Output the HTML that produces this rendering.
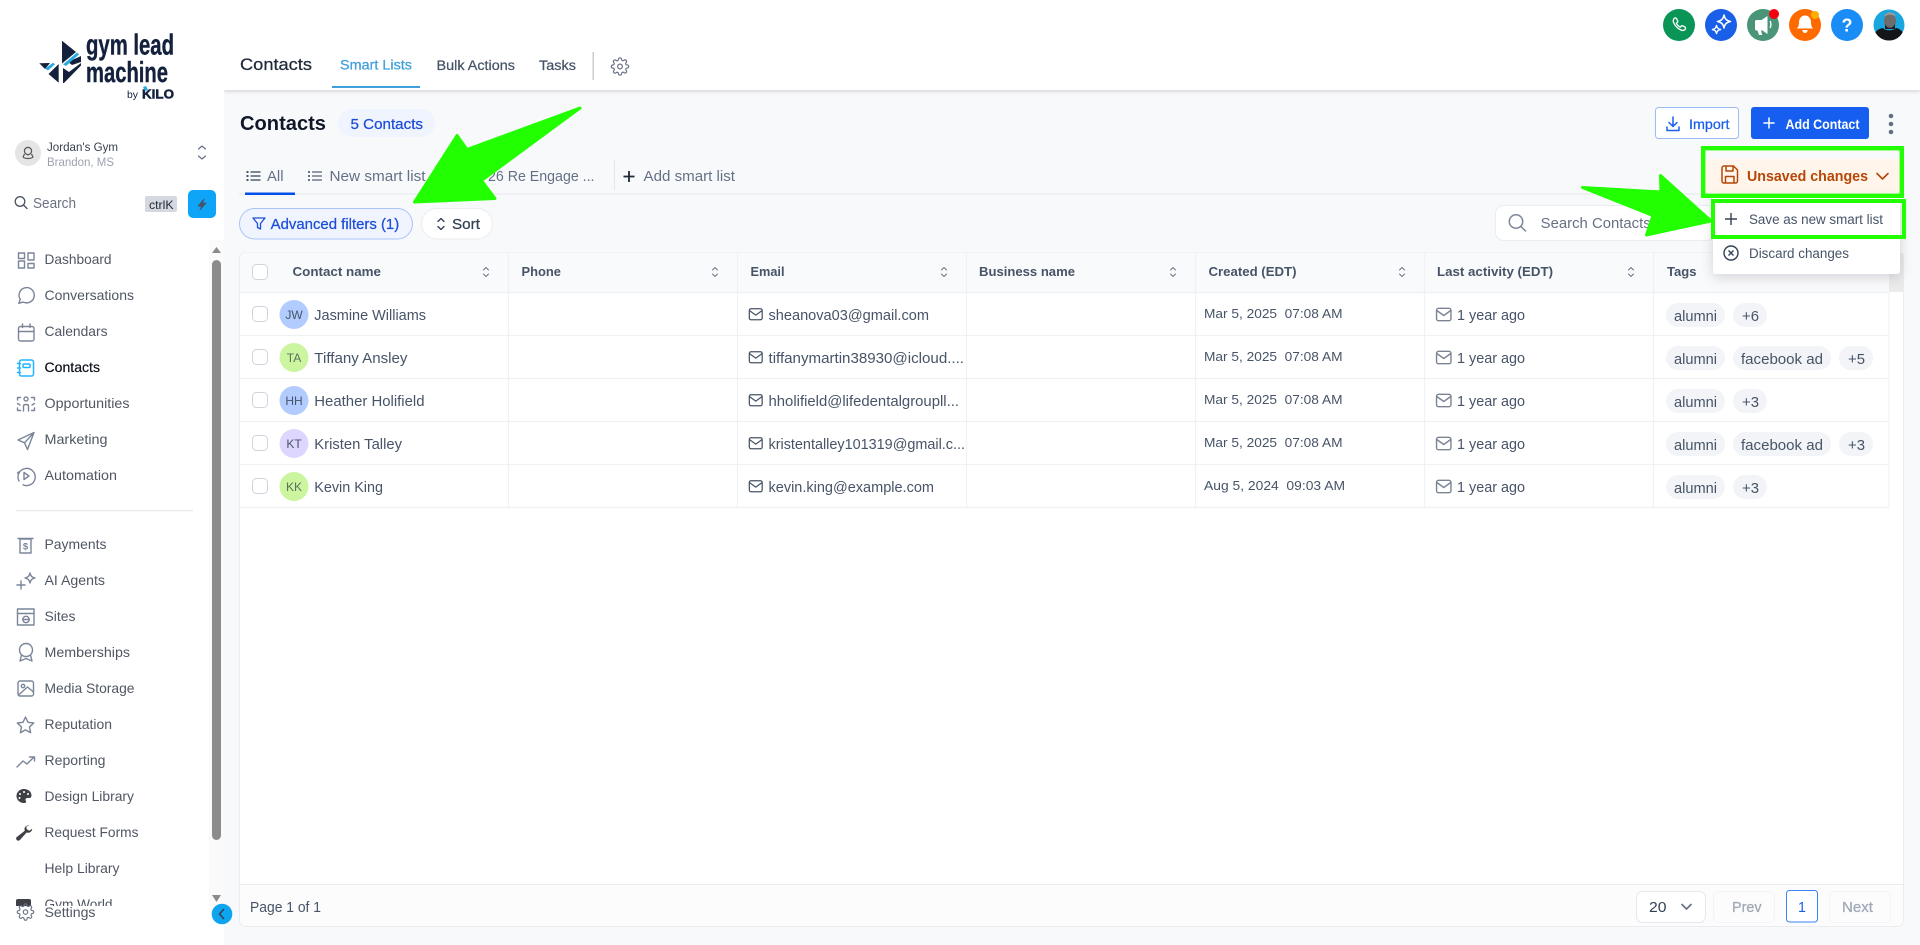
<!DOCTYPE html>
<html lang="en"><head><meta charset="utf-8"><title>Contacts</title>
<style>
html,body{margin:0;padding:0;background:#f8f9fb;overflow:hidden}
svg{display:block}
text{font-family:"Liberation Sans",sans-serif;white-space:pre}
.n{font-size:14px;fill:#505663}
.c{font-size:14.4px;fill:#475467}
.h{font-size:13px;font-weight:bold;fill:#475467}
.d{font-size:13px;fill:#475467}
.g{fill:none;stroke:#7a8599;stroke-width:1.4;stroke-linecap:round;stroke-linejoin:round}
.l{stroke:#f0f1f4;stroke-width:1.2}
.m{stroke-width:.25;stroke:currentColor}
</style></head>
<body>
<svg xmlns="http://www.w3.org/2000/svg" width="1920" height="945" viewBox="0 0 1920 945">
<defs>
<symbol id="gear" viewBox="0 0 24 24"><path fill="none" stroke="currentColor" stroke-width="1.5" d="M12 15a3 3 0 1 0 0-6 3 3 0 0 0 0 6z"/><path fill="none" stroke="currentColor" stroke-width="1.5" stroke-linejoin="round" d="M19.4 15a1.65 1.65 0 0 0 .33 1.82l.06.06a2 2 0 0 1 0 2.83 2 2 0 0 1-2.83 0l-.06-.06a1.65 1.65 0 0 0-1.82-.33 1.65 1.65 0 0 0-1 1.51V21a2 2 0 0 1-2 2 2 2 0 0 1-2-2v-.09A1.65 1.65 0 0 0 9 19.4a1.65 1.65 0 0 0-1.82.33l-.06.06a2 2 0 0 1-2.83 0 2 2 0 0 1 0-2.83l.06-.06a1.65 1.65 0 0 0 .33-1.82 1.65 1.65 0 0 0-1.51-1H3a2 2 0 0 1-2-2 2 2 0 0 1 2-2h.09A1.65 1.65 0 0 0 4.6 9a1.65 1.65 0 0 0-.33-1.82l-.06-.06a2 2 0 0 1 0-2.83 2 2 0 0 1 2.83 0l.06.06a1.65 1.65 0 0 0 1.82.33H9a1.65 1.65 0 0 0 1-1.51V3a2 2 0 0 1 2-2 2 2 0 0 1 2 2v.09a1.65 1.65 0 0 0 1 1.51 1.65 1.65 0 0 0 1.82-.33l.06-.06a2 2 0 0 1 2.83 0 2 2 0 0 1 0 2.83l-.06.06a1.65 1.65 0 0 0-.33 1.82V9a1.65 1.65 0 0 0 1.51 1H21a2 2 0 0 1 2 2 2 2 0 0 1-2 2h-.09a1.65 1.65 0 0 0-1.51 1z"/></symbol>
<symbol id="sort" viewBox="0 0 8 12"><path fill="none" stroke="#667085" stroke-width="1" stroke-linecap="round" stroke-linejoin="round" d="M1.5 4 4 1.5 6.500 4M1.500 8 4 10.500 6.500 8"/></symbol>
<symbol id="env" viewBox="0 0 16 14"><rect x=".8" y=".8" width="14.400" height="12.400" rx="2" fill="none" stroke="currentColor" stroke-width="1.400"/><path d="M1 3 8 8 15 3" fill="none" stroke="currentColor" stroke-width="1.400"/></symbol>
<symbol id="list" viewBox="0 0 14 12"><g fill="currentColor"><rect x="0" y="1" width="2" height="2"/><rect x="0" y="5" width="2" height="2"/><rect x="0" y="9" width="2" height="2"/><rect x="4" y="1.300" width="10" height="1.400"/><rect x="4" y="5.300" width="10" height="1.400"/><rect x="4" y="9.300" width="10" height="1.400"/></g></symbol>
<filter id="ds" x="-20%" y="-20%" width="140%" height="150%"><feDropShadow dx="0" dy="3" stdDeviation="6" flood-color="#101828" flood-opacity=".16"/></filter>
<filter id="hs" x="-2%" y="-10%" width="104%" height="130%"><feDropShadow dx="0" dy="1" stdDeviation="2" flood-color="#101828" flood-opacity=".18"/></filter>
<clipPath id="av"><circle cx="1889" cy="25" r="15.500"/></clipPath>
</defs>

<!-- main background -->
<rect width="1920" height="945" fill="#f8f9fb"/>

<!-- top header -->
<rect x="224" y="0" width="1696" height="90" fill="#fff" filter="url(#hs)"/>
<text x="240" y="70" font-size="17" fill="#1f2937" color="#1f2937" class="m" textLength="72" lengthAdjust="spacingAndGlyphs">Contacts</text>
<text x="340" y="69.500" font-size="13.500" fill="#3f9fdc" color="#3f9fdc" class="m" textLength="72" lengthAdjust="spacingAndGlyphs">Smart Lists</text>
<rect x="332" y="86" width="88" height="2" fill="#3f9fdc"/>
<text x="436.500" y="70" font-size="13.500" fill="#475467" color="#475467" class="m" textLength="78.500" lengthAdjust="spacingAndGlyphs">Bulk Actions</text>
<text x="539" y="70" font-size="13.500" fill="#475467" color="#475467" class="m" textLength="37" lengthAdjust="spacingAndGlyphs">Tasks</text>
<rect x="592.500" y="52" width="1.500" height="28" fill="#ccc"/>
<use href="#gear" x="610.500" y="57" width="19" height="19" color="#667085"/>

<!-- top right icons -->
<circle cx="1679" cy="25" r="16" fill="#0a9557"/>
<path d="M1674 18.500c.8-.8 2-.8 2.500 0l1.200 2.400c.3.600 0 1.100-.5 1.500l-.8.700c.8 1.800 2.200 3.200 4 4l.7-.8c.4-.5.900-.8 1.500-.5l2.400 1.200c.8.400.8 1.700 0 2.500-1 1-2.400 1.200-3.800.6-3.600-1.600-6-4-7.600-7.600-.6-1.400-.4-2.800.6-3.800z" fill="none" stroke="#fff" stroke-width="1.300" stroke-linejoin="round"/>
<circle cx="1721" cy="25" r="16" fill="#1a5fe8"/>
<path d="M1724 15c.8 4 2.500 5.700 6.500 6.500-4 .8-5.700 2.500-6.500 6.500-.8-4-2.500-5.700-6.500-6.500 4-.8 5.700-2.500 6.500-6.500zM1716.500 25.500c.5 2.500 1.500 3.500 4 4-2.500.5-3.500 1.500-4 4-.5-2.500-1.500-3.500-4-4 2.500-.5 3.500-1.500 4-4z" fill="none" stroke="#fff" stroke-width="1.500" stroke-linejoin="round"/>
<circle cx="1763" cy="25" r="16" fill="#4a9478"/>
<path d="M1755 21.500c0-1 .7-1.500 1.500-1.500h5l6-4v18l-5-3.500h-1.500l1.200 4.500h-3.200l-1.500-4.500h-1c-.8 0-1.500-.6-1.500-1.500z" fill="#fff"/><path d="M1770 21c1.200 1.500 1.200 5 0 7" fill="none" stroke="#fff" stroke-width="1.400"/>
<circle cx="1774" cy="14" r="5" fill="#f5000c"/>
<circle cx="1805" cy="25" r="16" fill="#ff6a00"/>
<path d="M1805 15.500c-4 0-6 3.300-6 7 0 3.200-.8 4.700-2.200 6h16.400c-1.400-1.300-2.200-2.800-2.200-6 0-3.700-2-7-6-7zM1802.300 30h5.400c-.3 2-1.300 3-2.700 3s-2.400-1-2.700-3z" fill="#fff"/>
<circle cx="1815" cy="15" r="4" fill="#fbb000"/>
<circle cx="1847" cy="25" r="16" fill="#1a8cf5"/>
<text x="1847" y="31.500" font-size="18" font-weight="bold" fill="#fff" text-anchor="middle">?</text>
<g clip-path="url(#av)"><rect x="1873" y="9" width="32" height="32" fill="#1aa7e0"/><path d="M1873 42c0-8 3-13 10-14 2 3 11 3 13 0 6 1 9 6 9 14z" fill="#141518"/><ellipse cx="1890" cy="21" rx="6" ry="7.500" fill="#6e6d6b"/><path d="M1884.500 17c2-3 9-3 11 0l-.5-3-5-2-5 2z" fill="#9a9a98"/><path d="M1885 24c2 5 8 5 10 0v5h-10z" fill="#1e1e1e"/></g>

<!-- sidebar -->
<rect x="0" y="0" width="224" height="945" fill="#fff"/>
<g fill="#14213d">
<polygon points="62,40.700 76,52 62,63.500"/>
<polygon points="68,62 81,56 81,62 72,65"/>
<polygon points="63,83 63,68 69,72 81,63 81,65.500 64,83"/>
<polygon points="48.500,74 58.700,64 58.700,82.700"/>
<polygon points="39.300,63.300 50,63 45,69"/>
</g>
<polygon points="63,64.500 77,52.500 79,54.500 66,66" fill="#29abe2"/>
<polygon points="45,68.500 53,62.700 55,64.200 48,70.500" fill="#29abe2"/>
<text x="86" y="54.500" font-size="29" font-weight="bold" fill="#14213d" stroke="#14213d" stroke-width=".4" textLength="88" lengthAdjust="spacingAndGlyphs">gym lead</text>
<text x="86" y="82" font-size="29" font-weight="bold" fill="#14213d" stroke="#14213d" stroke-width=".4" textLength="82" lengthAdjust="spacingAndGlyphs">machine</text>
<text x="127" y="98" font-size="10" fill="#14213d" textLength="11" lengthAdjust="spacingAndGlyphs">by</text>
<text x="142" y="98.500" font-size="13" font-weight="bold" fill="#14213d" textLength="32" lengthAdjust="spacingAndGlyphs" stroke="#14213d" stroke-width=".5">KILO</text>
<polygon points="143,87 146,86 148,90 145,91" fill="#29abe2"/>

<circle cx="28" cy="153" r="13" fill="#e5e5e5"/>
<circle cx="28" cy="151" r="3.600" fill="none" stroke="#555" stroke-width="1.200"/><path d="M23 157c2 2 8 2 10 0l-1.500-3M23 157l1.500-3M28 155.500v-1" fill="none" stroke="#555" stroke-width="1.200"/>
<text x="47" y="151" font-size="12.300" fill="#374151" textLength="71" lengthAdjust="spacingAndGlyphs">Jordan's Gym</text>
<text x="47" y="166" font-size="12.300" fill="#9ca3af" textLength="67" lengthAdjust="spacingAndGlyphs">Brandon, MS</text>
<path d="M198.500 149l3.500-3 3.500 3M198.500 156l3.500 3 3.500-3" fill="none" stroke="#667085" stroke-width="1.200" stroke-linecap="round" stroke-linejoin="round"/>

<circle cx="20" cy="201.500" r="4.800" fill="none" stroke="#4b5563" stroke-width="1.300"/><path d="M23.500 205l3.500 3.500" stroke="#4b5563" stroke-width="1.400" stroke-linecap="round"/>
<text x="33" y="208" font-size="14.500" fill="#6b7280" textLength="43" lengthAdjust="spacingAndGlyphs">Search</text>
<rect x="145" y="196" width="32" height="16" rx="2" fill="#d5d8de"/>
<text x="149" y="209" font-size="12" fill="#1f2937" textLength="24.500" lengthAdjust="spacingAndGlyphs">ctrlK</text>
<rect x="188" y="190" width="28" height="28" rx="5" fill="#0ea5f9"/>
<path d="M204 199l-6 7h3.500l-1.500 4 6-7h-3.500z" fill="#475467" stroke="#475467" stroke-width=".8" stroke-linejoin="round"/>

<!-- track and thumb -->
<rect x="209" y="240" width="15" height="666" fill="#fafafa"/>
<path d="M212 253l4.500-6 4.500 6z" fill="#8a8a8a"/>
<rect x="212" y="260" width="9" height="580" rx="4.500" fill="#8b8b8b"/>
<path d="M212 895l4.500 7 4.500-7z" fill="#8a8a8a"/>

<!-- sidebar icons -->
<g class="g">
<rect x="18.500" y="253" width="6" height="5.500"/><rect x="28" y="253" width="6" height="7"/><rect x="18.500" y="261" width="6" height="7"/><rect x="28" y="263.500" width="6" height="4.500"/>
<path d="M18.800 303.300l1.500-3.900a7.600 7.600 0 1 1 3.100 2.700z"/>
<rect x="18.500" y="326.500" width="15.500" height="14.500" rx="2"/><path d="M18.500 331.500h15.500M22.500 324v3.500M30 324v3.500"/>
</g>
<g fill="none" stroke="#20b5ff" stroke-width="1.500" stroke-linecap="round" stroke-linejoin="round">
<rect x="19.500" y="360" width="14" height="16" rx="2"/><rect x="23" y="364" width="7" height="3.500" rx="1"/><path d="M17.500 363.500h3M17.500 368h3M17.500 372.500h3"/>
</g>
<g class="g">
<circle cx="26" cy="399" r="2"/><path d="M23.500 411v-5c0-2 5-2 5 0v5"/><path d="M17.500 400v-2.500h3M34.500 400v-2.500h-3M17.500 408v2.500h3M34.500 408v2.500h-3M17.500 403.500l2.500 1.500M34.500 403.500l-2.500 1.500"/>
<path d="M34 432.500L18 440l6.500 2.800L27.500 449.500zM34 432.500l-9.500 10.300"/>
<path d="M19 481a8.600 8.600 0 1 1 4 3.800M18.500 472l-1 1"/><path d="M24 472.500v7l5-3.500z"/>
<rect x="20" y="539" width="11" height="14"/><path d="M18 538.500h15"/>
<path d="M30 573c.7 3 1.800 4.300 5 5-3.200.7-4.300 2-5 5-.7-3-1.800-4.300-5-5 3.200-.7 4.300-2 5-5zM21 581v8M17 585h8"/>
<rect x="17.500" y="609" width="16.500" height="16"/><path d="M17.500 613.500H34"/><circle cx="26" cy="619.500" r="3.200"/><path d="M22.800 619.500h6.400"/>
<circle cx="26" cy="650" r="6.500"/><path d="M21.500 655l-1.500 6 6-2.500 6 2.500-1.500-6"/>
<rect x="18" y="681" width="15.500" height="15" rx="2"/><circle cx="23" cy="686" r="1.700"/><path d="M18.500 695l9-8 6 5"/>
<path d="M25.500 717l2.500 5.300 5.700.7-4.200 4 1.100 5.700-5.100-2.800-5.100 2.800 1.100-5.700-4.200-4 5.700-.7z"/>
<path d="M17 767l6-6 4 3 7-7M29.500 757H34.500v4"/>
</g>
<text x="25.500" y="549.500" font-size="9.500" font-weight="bold" fill="#7a8599" text-anchor="middle">$</text>
<path d="M24 789a7.500 7 0 1 0 0 14c2 0 2.500-1 1.800-2.300-.8-1.500 0-2.700 1.700-2.700h2c1.300 0 2-1 2-2.700 0-3.700-3.700-6.300-7.500-6.300z" fill="#3f3f46"/>
<g fill="#fff"><circle cx="20" cy="794" r="1"/><circle cx="24" cy="792" r="1"/><circle cx="28" cy="794" r="1"/><circle cx="19.500" cy="798" r="1"/></g>
<path d="M29.500 825.500c-2.500-.6-5 1-5 3.700 0 .6.100 1 .3 1.500l-8 6.300c-1 .9-.8 2.400.2 3.200.9.700 2.100.6 2.900-.2l6.700-7.500c2.700 1 5.500-.8 5.600-3.700l-3 2-2.500-1.700-.4-2.600z" fill="#3f3f46"/>

<!-- sidebar labels -->
<text class="n" x="44.500" y="264" textLength="67" lengthAdjust="spacingAndGlyphs">Dashboard</text>
<text class="n" x="44.500" y="300" textLength="89.500" lengthAdjust="spacingAndGlyphs">Conversations</text>
<text class="n" x="44.500" y="336" textLength="63" lengthAdjust="spacingAndGlyphs">Calendars</text>
<text class="n" x="44.500" y="372" style="fill:#0b0f19" color="#0b0f19" textLength="55.500" lengthAdjust="spacingAndGlyphs" stroke="#0b0f19" stroke-width=".2">Contacts</text>
<text class="n" x="44.500" y="408" textLength="85" lengthAdjust="spacingAndGlyphs">Opportunities</text>
<text class="n" x="44.500" y="444" textLength="63" lengthAdjust="spacingAndGlyphs">Marketing</text>
<text class="n" x="44.500" y="480" textLength="72.500" lengthAdjust="spacingAndGlyphs">Automation</text>
<rect x="16" y="510" width="177" height="1.200" fill="#e7e8ea"/>
<text class="n" x="44.500" y="549" textLength="62" lengthAdjust="spacingAndGlyphs">Payments</text>
<text class="n" x="44.500" y="585" textLength="60.500" lengthAdjust="spacingAndGlyphs">AI Agents</text>
<text class="n" x="44.500" y="621" textLength="31" lengthAdjust="spacingAndGlyphs">Sites</text>
<text class="n" x="44.500" y="657" textLength="85.500" lengthAdjust="spacingAndGlyphs">Memberships</text>
<text class="n" x="44.500" y="693" textLength="90" lengthAdjust="spacingAndGlyphs">Media Storage</text>
<text class="n" x="44.500" y="729" textLength="67.500" lengthAdjust="spacingAndGlyphs">Reputation</text>
<text class="n" x="44.500" y="765" textLength="61" lengthAdjust="spacingAndGlyphs">Reporting</text>
<text class="n" x="44.500" y="801" textLength="89.500" lengthAdjust="spacingAndGlyphs">Design Library</text>
<text class="n" x="44.500" y="837" textLength="94" lengthAdjust="spacingAndGlyphs">Request Forms</text>
<text class="n" x="44.500" y="873" textLength="75" lengthAdjust="spacingAndGlyphs">Help Library</text>
<text class="n" x="44.500" y="909" textLength="68" lengthAdjust="spacingAndGlyphs">Gym World</text>
<rect x="16" y="899" width="15" height="10" rx="2" fill="#3f3f46"/>
<rect x="0" y="906" width="209" height="39" fill="#fff"/>
<rect x="209" y="906" width="15" height="39" fill="#fff"/>
<use href="#gear" x="16.500" y="903" width="18" height="18" color="#667085"/>
<text class="n" x="44.500" y="917" textLength="51" lengthAdjust="spacingAndGlyphs">Settings</text>
<circle cx="222" cy="914" r="10.300" fill="#0ea5f0"/>
<path d="M223.500 909.500l-4 4.500 4 4.500" fill="none" stroke="#344054" stroke-width="1.600" stroke-linecap="round" stroke-linejoin="round"/>

<!-- page title -->
<text x="240" y="130" font-size="20.500" font-weight="bold" fill="#101828" textLength="86" lengthAdjust="spacingAndGlyphs">Contacts</text>
<rect x="338" y="109" width="97" height="28" rx="14" fill="#eff4fe"/>
<text x="350.500" y="129" font-size="14.300" fill="#1d4ed8" color="#1d4ed8" class="m" textLength="72.500" lengthAdjust="spacingAndGlyphs">5 Contacts</text>

<!-- actions -->
<rect x="1655.500" y="107.500" width="83" height="31" rx="3" fill="#fff" stroke="#9cbcf5"/>
<path d="M1673 117v9M1669 122.500l4 4 4-4M1667 127v3.500h12V127" fill="none" stroke="#1a5fe8" stroke-width="1.500" stroke-linecap="round" stroke-linejoin="round"/>
<text x="1689" y="129" font-size="14" fill="#1a5fe8" color="#1a5fe8" class="m" textLength="40.500" lengthAdjust="spacingAndGlyphs">Import</text>
<rect x="1751" y="107" width="118" height="32" rx="3" fill="#155eef"/>
<path d="M1769 118v10M1764 123h10" stroke="#fff" stroke-width="1.500" stroke-linecap="round"/>
<text x="1785.500" y="129" font-size="14" font-weight="bold" fill="#fff" textLength="74" lengthAdjust="spacingAndGlyphs">Add Contact</text>
<g fill="#667085"><circle cx="1891" cy="116" r="2.300"/><circle cx="1891" cy="124" r="2.300"/><circle cx="1891" cy="132" r="2.300"/></g>

<!-- tabs -->
<rect x="239" y="193.500" width="1470" height="1" fill="#e4e7ec"/>
<use href="#list" x="246.500" y="170" width="14" height="12" color="#475467"/>
<text x="267" y="181" font-size="14.300" fill="#667085" textLength="16.500" lengthAdjust="spacingAndGlyphs">All</text>
<rect x="245" y="192.500" width="50" height="2.500" fill="#0050e8"/>
<use href="#list" x="308" y="170" width="14" height="12" color="#667085"/>
<text x="329.500" y="181" font-size="14.300" fill="#667085" textLength="96" lengthAdjust="spacingAndGlyphs">New smart list</text>
<text x="488" y="181" font-size="14.300" fill="#667085" textLength="106.500" lengthAdjust="spacingAndGlyphs">26 Re Engage ...</text>
<rect x="614" y="160" width="1" height="30" fill="#e4e7ec"/>
<path d="M629 171v11M623.500 176.500h11" stroke="#1f2937" stroke-width="1.800"/>
<text x="643.500" y="181" font-size="14.300" fill="#667085" textLength="91.500" lengthAdjust="spacingAndGlyphs">Add smart list</text>

<!-- filters -->
<rect x="239.500" y="208.500" width="173" height="30.500" rx="15.200" fill="#eff4ff" stroke="#a9c4f5"/>
<path d="M253 218h12l-4.500 5.500v5.500l-3-1.500v-4z" fill="none" stroke="#1d4ed8" stroke-width="1.300" stroke-linejoin="round"/>
<text x="270.700" y="229" font-size="14.300" fill="#1d4ed8" color="#1d4ed8" class="m" textLength="128.500" lengthAdjust="spacingAndGlyphs">Advanced filters (1)</text>
<rect x="421.500" y="208.500" width="71" height="30.500" rx="15.200" fill="#fff" stroke="#eaecf0"/>
<path d="M438 221.500l3-3 3 3M438 226.500l3 3 3-3" fill="none" stroke="#344054" stroke-width="1.400" stroke-linecap="round" stroke-linejoin="round"/>
<text x="452" y="229" font-size="14.300" fill="#344054" color="#344054" class="m" textLength="28" lengthAdjust="spacingAndGlyphs">Sort</text>

<!-- search -->
<rect x="1495.500" y="205.500" width="220" height="35" rx="8" fill="#fff" stroke="#eaecf0"/>
<circle cx="1516" cy="221.500" r="6.700" fill="none" stroke="#7b8494" stroke-width="1.500"/><path d="M1521 226.500l4.500 4.500" stroke="#7b8494" stroke-width="1.500" stroke-linecap="round"/>
<text x="1540.700" y="228" font-size="14.300" fill="#667085" textLength="110" lengthAdjust="spacingAndGlyphs">Search Contacts</text>

<!-- table card -->
<rect x="239.500" y="252.500" width="1664" height="674" rx="6" fill="#fff" stroke="#eaecf0"/>
<path d="M240 292v-34a5.500 5.500 0 0 1 5.500-5.500H1889V292z" fill="#f9fafb"/>
<rect x="1889" y="253" width="14.500" height="39" fill="#ebebec"/>
<rect x="1888.500" y="292" width="1" height="216" fill="#f0f1f4"/>
<g class="l">
<path d="M240 292.500H1889M240 335.500H1889M240 378.500H1889M240 421.500H1889M240 464.500H1889M240 507.500H1889"/>
<path d="M508.500 253V507M737.500 253V507M966.500 253V507M1195.500 253V507M1424.500 253V507M1653.500 253V507"/>
</g>
<path d="M240 884.500H1904" stroke="#eaecf0"/>
<path d="M240 885H1903V921a5 5 0 0 1-5 5H245a5 5 0 0 1-5-5z" fill="#fcfcfd"/>

<!-- header cells -->
<rect x="252.500" y="264.500" width="15" height="15" rx="4" fill="#fff" stroke="#d0d5dd"/>
<text class="h" x="292.500" y="276" textLength="88.500" lengthAdjust="spacingAndGlyphs">Contact name</text>
<text class="h" x="521.500" y="276" textLength="39.500" lengthAdjust="spacingAndGlyphs">Phone</text>
<text class="h" x="750.500" y="276" textLength="34" lengthAdjust="spacingAndGlyphs">Email</text>
<text class="h" x="979" y="276" textLength="96" lengthAdjust="spacingAndGlyphs">Business name</text>
<text class="h" x="1208.500" y="276" textLength="88" lengthAdjust="spacingAndGlyphs">Created (EDT)</text>
<text class="h" x="1437" y="276" textLength="116" lengthAdjust="spacingAndGlyphs">Last activity (EDT)</text>
<text class="h" x="1667" y="276" textLength="29.500" lengthAdjust="spacingAndGlyphs">Tags</text>
<use href="#sort" x="482" y="266" width="8" height="12"/>
<use href="#sort" x="711" y="266" width="8" height="12"/>
<use href="#sort" x="940" y="266" width="8" height="12"/>
<use href="#sort" x="1169" y="266" width="8" height="12"/>
<use href="#sort" x="1398" y="266" width="8" height="12"/>
<use href="#sort" x="1627" y="266" width="8" height="12"/>

<!-- row 1 -->
<rect x="252.500" y="306.500" width="15" height="15" rx="4" fill="#fff" stroke="#d0d5dd"/>
<circle cx="294" cy="314.500" r="14.500" fill="#b2ccff"/>
<text x="294" y="319" font-size="12" fill="#475467" text-anchor="middle">JW</text>
<text class="c" x="314.300" y="320" textLength="111.700" lengthAdjust="spacingAndGlyphs">Jasmine Williams</text>
<use href="#env" x="748.500" y="308" width="14.500" height="12.500" color="#475467"/>
<text class="c" x="768.500" y="320" textLength="160.500" lengthAdjust="spacingAndGlyphs">sheanova03@gmail.com</text>
<text class="d" x="1204" y="318" textLength="138.500" lengthAdjust="spacingAndGlyphs">Mar 5, 2025  07:08 AM</text>
<use href="#env" x="1435.500" y="307.500" width="16.500" height="14" color="#7b8494"/>
<text class="c" x="1457" y="320" textLength="68" lengthAdjust="spacingAndGlyphs">1 year ago</text>
<rect x="1666" y="303" width="59" height="24" rx="12" fill="#f2f4f7"/>
<text class="c" x="1674" y="321" textLength="43" lengthAdjust="spacingAndGlyphs">alumni</text>
<rect x="1733" y="303" width="34" height="24" rx="12" fill="#f2f4f7"/>
<text class="c" x="1742" y="321" textLength="17" lengthAdjust="spacingAndGlyphs">+6</text>

<!-- row 2 -->
<rect x="252.500" y="349.500" width="15" height="15" rx="4" fill="#fff" stroke="#d0d5dd"/>
<circle cx="294" cy="357.500" r="14.500" fill="#ccf5a0"/>
<text x="294" y="362" font-size="12" fill="#58735a" text-anchor="middle">TA</text>
<text class="c" x="314.300" y="363" textLength="93.200" lengthAdjust="spacingAndGlyphs">Tiffany Ansley</text>
<use href="#env" x="748.500" y="351" width="14.500" height="12.500" color="#475467"/>
<text class="c" x="768.500" y="363" textLength="195.500" lengthAdjust="spacingAndGlyphs">tiffanymartin38930@icloud....</text>
<text class="d" x="1204" y="361" textLength="138.500" lengthAdjust="spacingAndGlyphs">Mar 5, 2025  07:08 AM</text>
<use href="#env" x="1435.500" y="350.500" width="16.500" height="14" color="#7b8494"/>
<text class="c" x="1457" y="363" textLength="68" lengthAdjust="spacingAndGlyphs">1 year ago</text>
<rect x="1666" y="346" width="59" height="24" rx="12" fill="#f2f4f7"/>
<text class="c" x="1674" y="364" textLength="43" lengthAdjust="spacingAndGlyphs">alumni</text>
<rect x="1733" y="346" width="98" height="24" rx="12" fill="#f2f4f7"/>
<text class="c" x="1741" y="364" textLength="82" lengthAdjust="spacingAndGlyphs">facebook ad</text>
<rect x="1839" y="346" width="34" height="24" rx="12" fill="#f2f4f7"/>
<text class="c" x="1848" y="364" textLength="17" lengthAdjust="spacingAndGlyphs">+5</text>

<!-- row 3 -->
<rect x="252.500" y="392.500" width="15" height="15" rx="4" fill="#fff" stroke="#d0d5dd"/>
<circle cx="294" cy="400.500" r="14.500" fill="#b2ccff"/>
<text x="294" y="405" font-size="12" fill="#475467" text-anchor="middle">HH</text>
<text class="c" x="314.300" y="406" textLength="110.200" lengthAdjust="spacingAndGlyphs">Heather Holifield</text>
<use href="#env" x="748.500" y="394" width="14.500" height="12.500" color="#475467"/>
<text class="c" x="768.500" y="406" textLength="190.500" lengthAdjust="spacingAndGlyphs">hholifield@lifedentalgroupll...</text>
<text class="d" x="1204" y="404" textLength="138.500" lengthAdjust="spacingAndGlyphs">Mar 5, 2025  07:08 AM</text>
<use href="#env" x="1435.500" y="393.500" width="16.500" height="14" color="#7b8494"/>
<text class="c" x="1457" y="406" textLength="68" lengthAdjust="spacingAndGlyphs">1 year ago</text>
<rect x="1666" y="389" width="59" height="24" rx="12" fill="#f2f4f7"/>
<text class="c" x="1674" y="407" textLength="43" lengthAdjust="spacingAndGlyphs">alumni</text>
<rect x="1733" y="389" width="34" height="24" rx="12" fill="#f2f4f7"/>
<text class="c" x="1742" y="407" textLength="17" lengthAdjust="spacingAndGlyphs">+3</text>

<!-- row 4 -->
<rect x="252.500" y="435.500" width="15" height="15" rx="4" fill="#fff" stroke="#d0d5dd"/>
<circle cx="294" cy="443.500" r="14.500" fill="#ddd6fe"/>
<text x="294" y="448" font-size="12" fill="#475467" text-anchor="middle">KT</text>
<text class="c" x="314.300" y="449" textLength="87.700" lengthAdjust="spacingAndGlyphs">Kristen Talley</text>
<use href="#env" x="748.500" y="437" width="14.500" height="12.500" color="#475467"/>
<text class="c" x="768.500" y="449" textLength="196.500" lengthAdjust="spacingAndGlyphs">kristentalley101319@gmail.c...</text>
<text class="d" x="1204" y="447" textLength="138.500" lengthAdjust="spacingAndGlyphs">Mar 5, 2025  07:08 AM</text>
<use href="#env" x="1435.500" y="436.500" width="16.500" height="14" color="#7b8494"/>
<text class="c" x="1457" y="449" textLength="68" lengthAdjust="spacingAndGlyphs">1 year ago</text>
<rect x="1666" y="432" width="59" height="24" rx="12" fill="#f2f4f7"/>
<text class="c" x="1674" y="450" textLength="43" lengthAdjust="spacingAndGlyphs">alumni</text>
<rect x="1733" y="432" width="98" height="24" rx="12" fill="#f2f4f7"/>
<text class="c" x="1741" y="450" textLength="82" lengthAdjust="spacingAndGlyphs">facebook ad</text>
<rect x="1839" y="432" width="34" height="24" rx="12" fill="#f2f4f7"/>
<text class="c" x="1848" y="450" textLength="17" lengthAdjust="spacingAndGlyphs">+3</text>

<!-- row 5 -->
<rect x="252.500" y="478.500" width="15" height="15" rx="4" fill="#fff" stroke="#d0d5dd"/>
<circle cx="294" cy="486.500" r="14.500" fill="#ccf5a0"/>
<text x="294" y="491" font-size="12" fill="#58735a" text-anchor="middle">KK</text>
<text class="c" x="314.300" y="492" textLength="68.700" lengthAdjust="spacingAndGlyphs">Kevin King</text>
<use href="#env" x="748.500" y="480" width="14.500" height="12.500" color="#475467"/>
<text class="c" x="768.500" y="492" textLength="165.500" lengthAdjust="spacingAndGlyphs">kevin.king@example.com</text>
<text class="d" x="1204" y="490" textLength="141" lengthAdjust="spacingAndGlyphs">Aug 5, 2024  09:03 AM</text>
<use href="#env" x="1435.500" y="479.500" width="16.500" height="14" color="#7b8494"/>
<text class="c" x="1457" y="492" textLength="68" lengthAdjust="spacingAndGlyphs">1 year ago</text>
<rect x="1666" y="475" width="59" height="24" rx="12" fill="#f2f4f7"/>
<text class="c" x="1674" y="493" textLength="43" lengthAdjust="spacingAndGlyphs">alumni</text>
<rect x="1733" y="475" width="34" height="24" rx="12" fill="#f2f4f7"/>
<text class="c" x="1742" y="493" textLength="17" lengthAdjust="spacingAndGlyphs">+3</text>

<!-- footer -->
<text class="c" x="250" y="912" textLength="71" lengthAdjust="spacingAndGlyphs">Page 1 of 1</text>
<rect x="1636.500" y="891.500" width="69" height="31" rx="6" fill="#fff" stroke="#e4e7ec"/>
<text x="1649" y="912" font-size="14.500" fill="#344054" textLength="17.500" lengthAdjust="spacingAndGlyphs">20</text>
<path d="M1682 904.500l4.500 4.500 4.500-4.500" fill="none" stroke="#667085" stroke-width="1.700" stroke-linecap="round" stroke-linejoin="round"/>
<rect x="1713.500" y="891.500" width="61" height="31" rx="6" fill="#fcfcfd" stroke="#f2f4f7"/>
<text x="1732" y="912" font-size="14.300" fill="#a0a8b7" color="#a0a8b7" class="m" textLength="29.500" lengthAdjust="spacingAndGlyphs">Prev</text>
<rect x="1786.500" y="890.500" width="31" height="31.500" rx="3" fill="#fff" stroke="#3b82f6"/>
<text x="1802" y="912" font-size="14.300" fill="#1a5fe8" text-anchor="middle">1</text>
<rect x="1829.500" y="891.500" width="61" height="31" rx="6" fill="#fcfcfd" stroke="#f2f4f7"/>
<text x="1842" y="912" font-size="14.300" fill="#a0a8b7" color="#a0a8b7" class="m" textLength="31" lengthAdjust="spacingAndGlyphs">Next</text>

<!-- unsaved changes -->
<rect x="1706" y="159" width="194" height="34" fill="#fff5ea"/>
<path d="M1722 168a2 2 0 0 1 2-2h9.500l4 4v11a2 2 0 0 1-2 2h-11.500a2 2 0 0 1-2-2zM1725.500 183v-6.500h8.500v6.500M1726 166.500v4.500h7v-4.500" fill="none" stroke="#b54708" stroke-width="1.500" stroke-linejoin="round"/>
<text x="1747" y="181" font-size="14.500" font-weight="bold" fill="#b54708" textLength="121" lengthAdjust="spacingAndGlyphs">Unsaved changes</text>
<path d="M1877 173.500l5.500 5.500 5.500-5.500" fill="none" stroke="#b54708" stroke-width="1.600" stroke-linecap="round" stroke-linejoin="round"/>

<!-- dropdown -->
<rect x="1713" y="197" width="187" height="77" rx="3" fill="#fff" filter="url(#ds)"/>
<path d="M1731 213v12M1725 219h12" stroke="#344054" stroke-width="1.400"/>
<text x="1749" y="224" font-size="13.500" fill="#475467" textLength="134" lengthAdjust="spacingAndGlyphs">Save as new smart list</text>
<circle cx="1731" cy="253" r="7" fill="none" stroke="#344054" stroke-width="1.400"/><path d="M1728.500 250.500l5 5M1733.500 250.500l-5 5" stroke="#344054" stroke-width="1.400"/>
<text x="1749" y="258" font-size="13.500" fill="#475467" textLength="100" lengthAdjust="spacingAndGlyphs">Discard changes</text>

<!-- green annotations -->
<rect x="1703.200" y="148.200" width="198.600" height="47.600" fill="none" stroke="#22ff00" stroke-width="4.400"/>
<rect x="1713" y="201" width="191" height="36" fill="none" stroke="#22ff00" stroke-width="4"/>
<path d="M580 108 467 149.500 457 135.500 414.500 202 495 198.500 481.500 180.500z" fill="#22ff00" stroke="#22ff00" stroke-width="3" stroke-linejoin="round"/>
<path d="M1582.500 187.500 1661 192 1660.500 175.500 1711 221 1646.500 235 1653 215.500z" fill="#22ff00" stroke="#22ff00" stroke-width="3" stroke-linejoin="round"/>
</svg>
</body></html>
